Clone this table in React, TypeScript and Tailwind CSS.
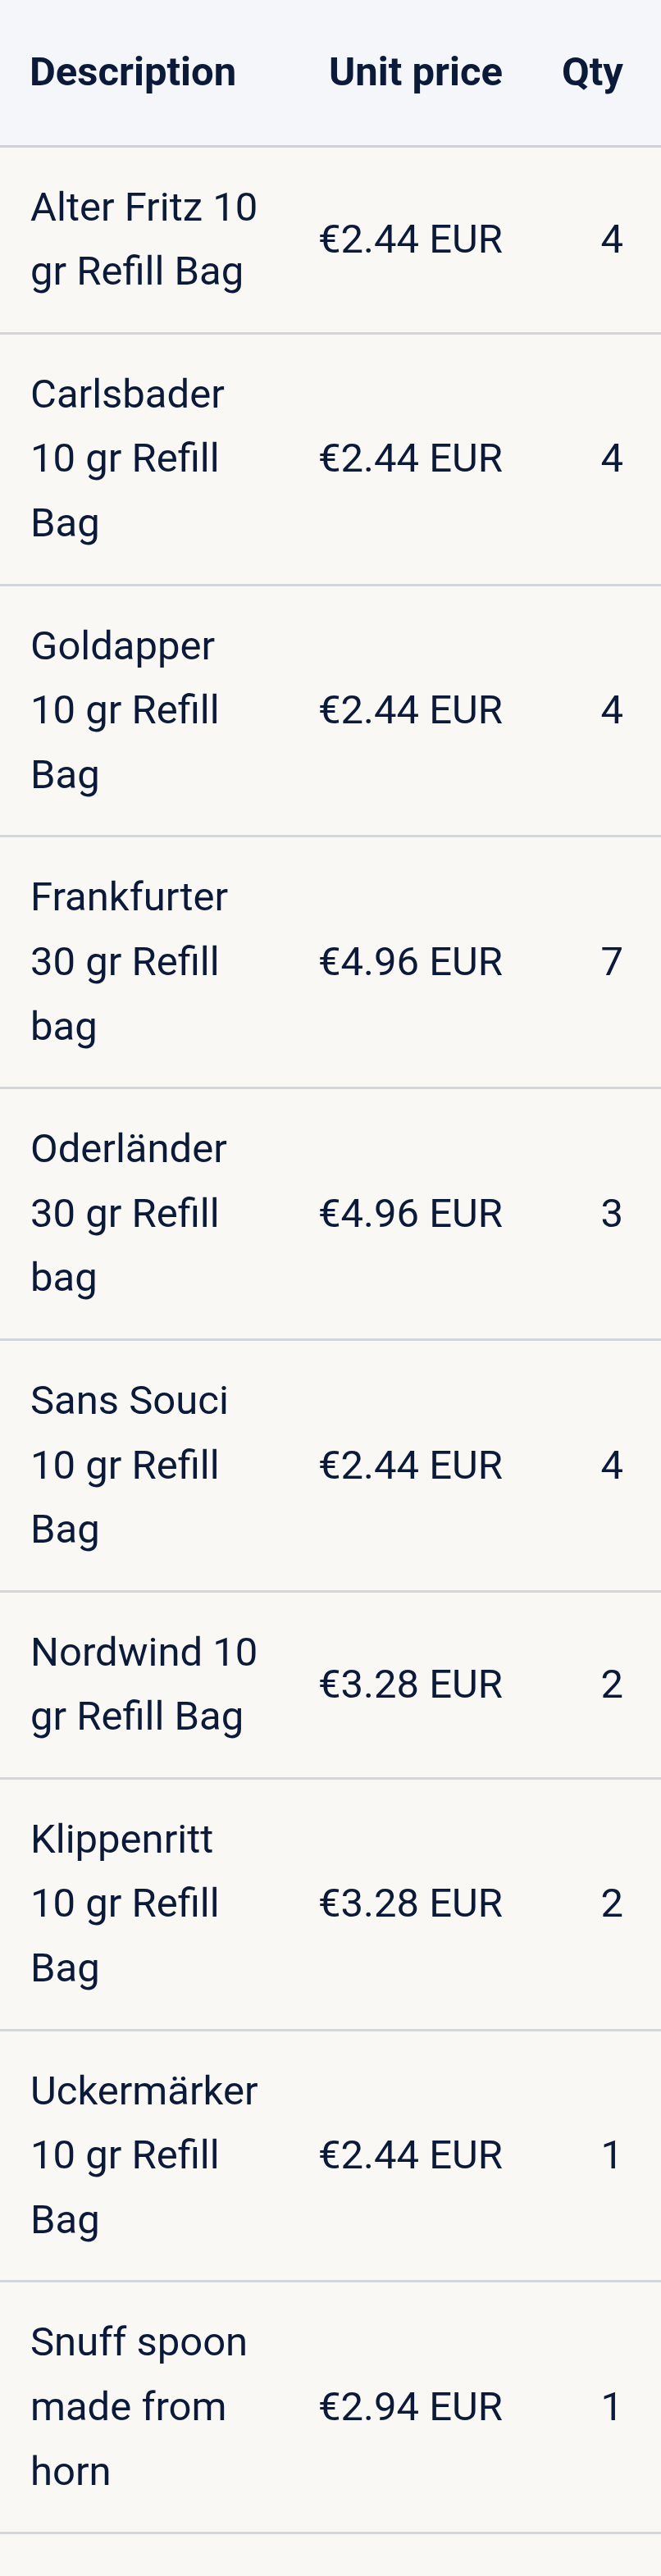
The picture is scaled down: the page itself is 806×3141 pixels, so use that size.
import React from "react";

type Item = {
  lines: string[];
  price: string;
  qty: number;
};

const items: Item[] = [
  { lines: ["Alter Fritz 10", "gr Refill Bag"], price: "€2.44 EUR", qty: 4 },
  { lines: ["Carlsbader", "10 gr Refill", "Bag"], price: "€2.44 EUR", qty: 4 },
  { lines: ["Goldapper", "10 gr Refill", "Bag"], price: "€2.44 EUR", qty: 4 },
  { lines: ["Frankfurter", "30 gr Refill", "bag"], price: "€4.96 EUR", qty: 7 },
  { lines: ["Oderländer", "30 gr Refill", "bag"], price: "€4.96 EUR", qty: 3 },
  { lines: ["Sans Souci", "10 gr Refill", "Bag"], price: "€2.44 EUR", qty: 4 },
  { lines: ["Nordwind 10", "gr Refill Bag"], price: "€3.28 EUR", qty: 2 },
  { lines: ["Klippenritt", "10 gr Refill", "Bag"], price: "€3.28 EUR", qty: 2 },
  { lines: ["Uckermärker", "10 gr Refill", "Bag"], price: "€2.44 EUR", qty: 1 },
  { lines: ["Snuff spoon", "made from", "horn"], price: "€2.94 EUR", qty: 1 },
];

const cols = "grid grid-cols-[360px_290px_156px]";

export default function App() {
  return (
    <div
      className="min-h-[3141px] w-[806px] bg-[#f9f8f5] text-[#0b1a38] text-[49px] leading-[78.6px]"
      style={{ fontFamily: "Roboto, 'Noto Sans', sans-serif" }}
    >
      {/* header */}
      <div className={`${cols} bg-[#f4f6fa] border-b-[3px] border-[#cdd1d5] font-bold`}>
        <div className="pl-[36px] py-[49px]">Description</div>
        <div className="pr-[37px] py-[49px] text-right">Unit price</div>
        <div className="pr-[46px] py-[49px] text-right">Qty</div>
      </div>

      {items.map((item, i) => (
        <div key={i} className={`${cols} border-b-[3px] border-[#d2d5d9]`}>
          <div className="pl-[37px] py-[34px]">
            {item.lines.map((l, j) => (
              <div key={j} className="whitespace-nowrap">
                {l}
              </div>
            ))}
          </div>
          <div className="pr-[37px] py-[34px] flex items-center justify-end whitespace-nowrap">
            {item.price}
          </div>
          <div className="pr-[46px] py-[34px] flex items-center justify-end">{item.qty}</div>
        </div>
      ))}
    </div>
  );
}
